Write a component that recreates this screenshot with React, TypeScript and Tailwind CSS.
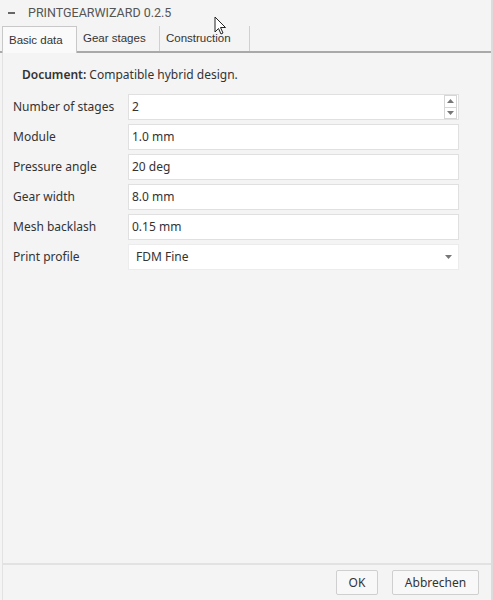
import React from 'react';

interface Field {
  label: string;
  value: string;
  kind: 'spin' | 'text' | 'select';
}

const fields: Field[] = [
  { label: 'Number of stages', value: '2', kind: 'spin' },
  { label: 'Module', value: '1.0 mm', kind: 'text' },
  { label: 'Pressure angle', value: '20 deg', kind: 'text' },
  { label: 'Gear width', value: '8.0 mm', kind: 'text' },
  { label: 'Mesh backlash', value: '0.15 mm', kind: 'text' },
  { label: 'Print profile', value: 'FDM Fine', kind: 'select' },
];

const tabs = ['Basic data', 'Gear stages', 'Construction'];

function Triangle({ up }: { up?: boolean }) {
  return (
    <svg width="7" height="4" viewBox="0 0 7 4">
      <path d={up ? 'M0 4 L3.5 0 L7 4 Z' : 'M0 0 L7 0 L3.5 4 Z'} fill="#777" />
    </svg>
  );
}

function App() {
  return (
    <div
      className="relative w-[493px] h-[600px] bg-[#f4f4f4] flex flex-col text-[#333] border-r-2 border-[#dcdcdc]"
      style={{ fontFamily: '"Noto Sans", sans-serif' }}
    >
      {/* title bar */}
      <div className="h-[26px] flex items-center pl-[8px] text-[12.5px] text-[#555]" style={{ fontFamily: 'Roboto, sans-serif' }}>
        <span className="w-[7px] h-[2px] bg-[#666] mr-[13px]" />
        <span>PRINTGEARWIZARD 0.2.5</span>
      </div>

      {/* tabs */}
      <div className="h-[27px] flex items-end pl-[2px] border-b-2 border-[#a9a9a9]" style={{ fontFamily: '"Liberation Sans", sans-serif' }}>
        {tabs.map((t, i) => (
          <div
            key={t}
            className={
              i === 0
                ? 'h-[27px] w-[75px] px-[6px] pt-[5px] text-[11.5px] bg-[#fafafa] border border-b-0 border-[#c8c8c8] -mb-[2px]'
                : 'h-[25px] px-[6px] pt-[4px] text-[11.5px] border-r border-[#d0d0d0] ' + (i === 1 ? 'w-[83px]' : 'w-[90px]')
            }
          >
            {t}
          </div>
        ))}
      </div>

      {/* content */}
      <div className="flex-1 ml-[2px] border-l border-[#e2e2e2] flex flex-col">
        <div className="pl-[19px] pt-[13px] pb-[10px] text-[12px]">
          <span className="font-semibold">Document:</span> Compatible hybrid design.
        </div>
        <div className="flex flex-col gap-[4px] pl-[10px] pr-[32px] text-[12px]">
          {fields.map((f) => (
            <div key={f.label} className="flex items-center h-[26px]">
              <div className="w-[115px]">{f.label}</div>
              <div
                className={
                  'flex-1 h-[26px] bg-white border flex items-center pl-[3px] ' +
                  (f.kind === 'select' ? 'border-[#ececec] pl-[7px] pr-[6px]' : 'border-[#e0e0e0] pr-[1px]')
                }
              >
                <span className="flex-1">{f.value}</span>
                {f.kind === 'spin' && (
                  <div className="flex flex-col h-[24px] w-[13px] border border-[#d6d6d6]">
                    <div className="flex-1 flex items-center justify-center border-b border-[#d6d6d6]">
                      <Triangle up />
                    </div>
                    <div className="flex-1 flex items-center justify-center">
                      <Triangle />
                    </div>
                  </div>
                )}
                {f.kind === 'select' && <Triangle />}
              </div>
            </div>
          ))}
        </div>
      </div>

      {/* footer */}
      <div className="h-[37px] ml-[2px] border-t-2 border-l border-[#e2e2e2] flex items-start justify-end gap-[14px] pt-[5px] pr-[12px] text-[12px]">
        <button className="h-[25px] w-[42px] bg-[#f8f8f8] border border-[#cfcfcf] rounded-[2px]">OK</button>
        <button className="h-[25px] w-[87px] bg-[#f8f8f8] border border-[#cfcfcf] rounded-[2px]">Abbrechen</button>
      </div>

      {/* mouse cursor */}
      <svg className="absolute left-[214px] top-[16px]" width="14" height="20" viewBox="0 0 14 20">
        <path d="M1 1 L1 16 L4.5 12.5 L7 18 L9 17 L6.5 11.5 L11.5 11.5 Z" fill="white" stroke="#222" strokeWidth="1" />
      </svg>
    </div>
  );
}

export default App;
